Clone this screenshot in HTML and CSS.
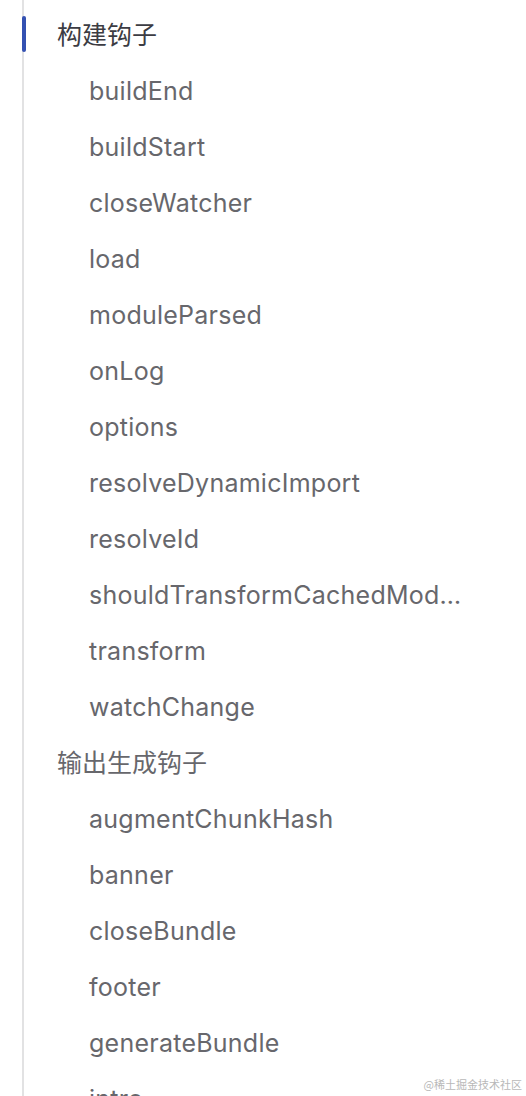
FILE: index.html
```html
<!doctype html>
<html lang="zh-CN">
  <head>
    <meta charset="UTF-8" />
    <meta name="viewport" content="width=device-width, initial-scale=1.0" />
    <title>Outline</title>
    <link rel="stylesheet" href="styles.css">
  </head>
  <body>
    <nav class="outline">
      <ul class="outline-list">
        <li class="outline-item level-2 active">构建钩子</li>
        <li class="outline-item level-3">buildEnd</li>
        <li class="outline-item level-3">buildStart</li>
        <li class="outline-item level-3">closeWatcher</li>
        <li class="outline-item level-3">load</li>
        <li class="outline-item level-3">moduleParsed</li>
        <li class="outline-item level-3">onLog</li>
        <li class="outline-item level-3">options</li>
        <li class="outline-item level-3">resolveDynamicImport</li>
        <li class="outline-item level-3">resolveId</li>
        <li class="outline-item level-3">shouldTransformCachedModule</li>
        <li class="outline-item level-3">transform</li>
        <li class="outline-item level-3">watchChange</li>
        <li class="outline-item level-2">输出生成钩子</li>
        <li class="outline-item level-3">augmentChunkHash</li>
        <li class="outline-item level-3">banner</li>
        <li class="outline-item level-3">closeBundle</li>
        <li class="outline-item level-3">footer</li>
        <li class="outline-item level-3">generateBundle</li>
        <li class="outline-item level-3">intro</li>
      </ul>
    </nav>
    <div class="watermark">@稀土掘金技术社区</div>
  </body>
</html>
```

FILE: styles.css
```css
* {
  margin: 0;
  padding: 0;
  box-sizing: border-box;
}

html,
body {
  height: 100%;
  overflow: hidden;
}

body {
  font-family: Inter, "Noto Sans CJK SC", sans-serif;
  background: #fff;
  position: relative;
}

.outline {
  margin-left: 22px;
  border-left: 2px solid #e2e2e3;
  min-height: 100%;
  padding-top: 7px;
  width: 442px;
}

.outline-list {
  list-style: none;
}

.outline-item {
  position: relative;
  height: 56px;
  line-height: 56px;
  font-size: 25px;
  color: #67676c;
  white-space: nowrap;
  overflow: hidden;
  text-overflow: ellipsis;
}

.level-2 {
  padding-left: 33px;
}

.level-3 {
  padding-left: 65px;
  letter-spacing: 0.25px;
}

.active {
  color: #3c3c43;
  overflow: visible;
}

.active::before {
  content: "";
  position: absolute;
  left: -2px;
  top: 9px;
  width: 4px;
  height: 36px;
  border-radius: 2px;
  background: #3451b2;
}

.watermark {
  position: absolute;
  right: 4px;
  bottom: 4px;
  font-size: 11px;
  font-family: "Noto Sans CJK SC", sans-serif;
  color: #b8b8b8;
}
```
